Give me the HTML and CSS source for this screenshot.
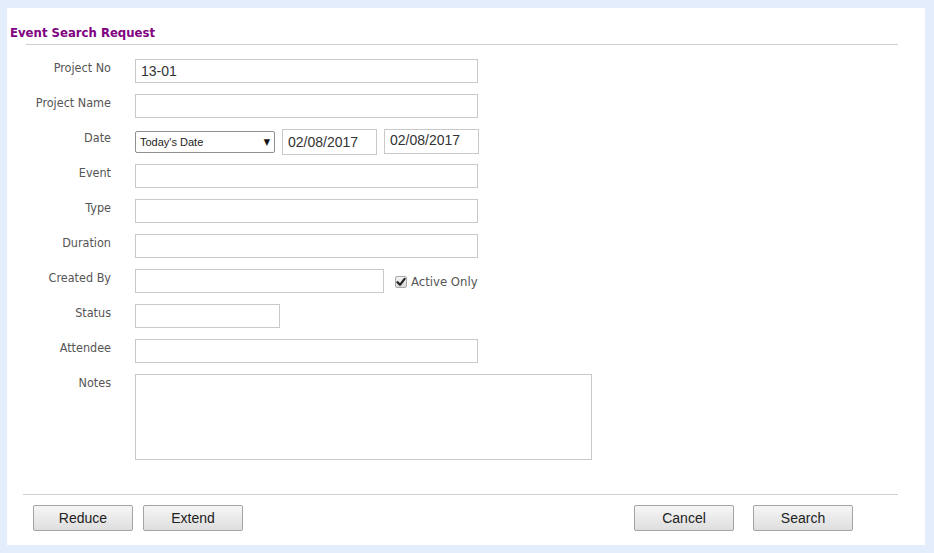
FILE: index.html
```html
<!DOCTYPE html>
<html>
<head>
<meta charset="utf-8">
<title>Event Search Request</title>
<link rel="stylesheet" href="styles.css">
</head>
<body>
<div class="panel">
  <h1 class="title">Event Search Request</h1>
  <div class="rule rule-top"></div>
  <form class="form">
    <div class="row">
      <label class="lbl">Project No</label>
      <input class="txt w-full" type="text" value="13-01">
    </div>
    <div class="row">
      <label class="lbl">Project Name</label>
      <input class="txt w-full" type="text">
    </div>
    <div class="row">
      <label class="lbl">Date</label>
      <div class="date-group">
        <span class="select-wrap"><select class="sel"><option>Today's Date</option></select></span>
        <input class="txt date" type="text" value="02/08/2017">
        <input class="txt date date2" type="text" value="02/08/2017">
      </div>
    </div>
    <div class="row">
      <label class="lbl">Event</label>
      <input class="txt w-full" type="text">
    </div>
    <div class="row">
      <label class="lbl">Type</label>
      <input class="txt w-full" type="text">
    </div>
    <div class="row">
      <label class="lbl">Duration</label>
      <input class="txt w-full" type="text">
    </div>
    <div class="row">
      <label class="lbl">Created By</label>
      <input class="txt w-created" type="text">
      <span class="check">
        <span class="box"><svg width="10" height="10" viewBox="0 0 10 10"><path d="M1.5 5.2 L4 7.8 L8.6 1.8" fill="none" stroke="#222" stroke-width="2.2" stroke-linecap="round" stroke-linejoin="round"/></svg></span>
        <span class="check-text">Active Only</span>
      </span>
    </div>
    <div class="row">
      <label class="lbl">Status</label>
      <input class="txt w-status" type="text">
    </div>
    <div class="row">
      <label class="lbl">Attendee</label>
      <input class="txt w-full" type="text">
    </div>
    <div class="row row-notes">
      <label class="lbl">Notes</label>
      <textarea class="txt notes"></textarea>
    </div>
  </form>
  <div class="rule rule-bottom"></div>
  <div class="actions">
    <div class="btn-group">
      <button class="btn" type="button">Reduce</button>
      <button class="btn" type="button">Extend</button>
    </div>
    <div class="btn-group btn-group-right">
      <button class="btn" type="button">Cancel</button>
      <button class="btn" type="button">Search</button>
    </div>
  </div>
</div>
</body>
</html>
```

FILE: styles.css
```css
html, body {
  margin: 0;
  padding: 0;
}
body {
  background: #e3edfb;
  width: 934px;
  height: 553px;
  overflow: hidden;
  font-family: "DejaVu Sans Condensed", "DejaVu Sans", sans-serif;
}
.panel {
  margin: 8px 9px 0 7px;
  height: 537px;
  background: #ffffff;
  box-sizing: border-box;
  padding-top: 17px;
  display: flex;
  flex-direction: column;
}
.title {
  margin: 0 0 0 3px;
  font-family: "DejaVu Sans Condensed", "DejaVu Sans", sans-serif;
  font-weight: bold;
  font-size: 13px;
  line-height: 16px;
  color: #800080;
}
.rule {
  height: 1px;
  background: #cfcfcf;
}
.rule-top {
  margin: 3px 27px 0 19px;
}
.form {
  margin: 14px 0 0 0;
  display: flex;
  flex-direction: column;
}
.row {
  display: flex;
  align-items: flex-start;
  height: 35px;
}
.row-notes {
  height: 86px;
}
.lbl {
  width: 104px;
  margin-right: 24px;
  text-align: right;
  font-size: 12.5px;
  line-height: 15px;
  padding-top: 1px;
  color: #555555;
}
.txt {
  box-sizing: border-box;
  height: 24px;
  border: 1px solid #c9c9c9;
  border-radius: 0;
  padding: 0 5px;
  font-family: "Liberation Sans", Arial, sans-serif;
  font-size: 14px;
  color: #333333;
  background: #fff;
  outline: none;
  margin: 0;
}
.w-full { width: 343px; }
.w-created { width: 249px; }
.w-status { width: 145px; }
.notes {
  width: 457px;
  height: 86px;
  resize: none;
}
.date-group {
  display: flex;
  align-items: flex-start;
  gap: 7px;
}
.select-wrap {
  position: relative;
  display: block;
  margin-top: 2px;
}
.select-wrap::after {
  content: "\25BC";
  position: absolute;
  right: 5px;
  top: 5px;
  font-size: 9px;
  line-height: 12px;
  color: #111;
  pointer-events: none;
}
.sel {
  -webkit-appearance: none;
  appearance: none;
  box-sizing: border-box;
  width: 140px;
  height: 22px;
  border: 1px solid #8f8f8f;
  border-radius: 2px;
  background: #fff;
  padding: 0 4px;
  font-family: "Liberation Sans", Arial, sans-serif;
  font-size: 11px;
  color: #222;
  margin: 0;
}
.date {
  width: 95px;
  height: 26px;
  padding-bottom: 1px;
}
.date2 {
  height: 25px;
  padding-bottom: 3px;
}
.check {
  display: flex;
  align-items: center;
  margin-left: 11px;
  margin-top: 5px;
}
.box {
  box-sizing: border-box;
  width: 12px;
  height: 12px;
  border: 1px solid #a8a8a8;
  border-radius: 2px;
  background: linear-gradient(#f4f4f4, #d9d9d9);
  display: flex;
  align-items: center;
  justify-content: center;
}
.check-text {
  margin-left: 4px;
  font-size: 13px;
  line-height: 16px;
  color: #555555;
  padding-top: 0;
}
.rule-bottom {
  margin: 34px 27px 0 16px;
}
.actions {
  display: flex;
  justify-content: space-between;
  padding: 10px 72px 0 26px;
}
.btn-group {
  display: flex;
  gap: 10px;
}
.btn-group-right {
  gap: 19px;
}
.btn {
  box-sizing: border-box;
  width: 100px;
  height: 26px;
  border: 1px solid #a3a3a3;
  border-radius: 2px;
  background: linear-gradient(#f6f6f6, #dedede);
  font-family: "Liberation Sans", Arial, sans-serif;
  font-size: 14px;
  color: #222;
  padding: 0;
  margin: 0;
}
```
